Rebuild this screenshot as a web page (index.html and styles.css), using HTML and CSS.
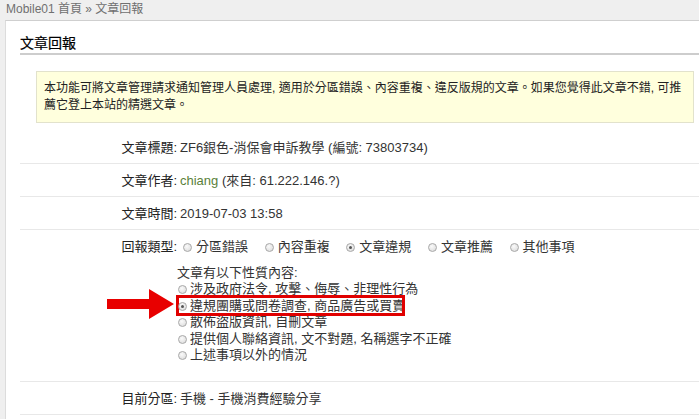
FILE: index.html
```html
<!DOCTYPE html>
<html lang="zh-Hant">
<head>
    <meta charset="UTF-8">
    <title>文章回報 - Mobile01</title>
    <link rel="stylesheet" href="styles.css">
</head>
<body>

  <div class="crumb">Mobile01 首頁 &raquo; 文章回報</div>

  <div class="panel">
    <h2 class="panel-title">文章回報</h2>

    <div class="notice">本功能可將文章管理請求通知管理人員處理, 適用於分區錯誤、內容重複、違反版規的文章。如果您覺得此文章不錯, 可推薦它登上本站的精選文章。</div>

    <!-- report details -->
    <div class="row">
      <div class="label">文章標題:</div>
      <div class="value">ZF6銀色-消保會申訴教學 (編號: 73803734)</div>
    </div>
    <div class="row">
      <div class="label">文章作者:</div>
      <div class="value"><span class="author">chiang</span> (來自: 61.222.146.?)</div>
    </div>
    <div class="row">
      <div class="label">文章時間:</div>
      <div class="value">2019-07-03 13:58</div>
    </div>
    <div class="row row-type">
      <div class="label">回報類型:</div>
      <div class="value">
        <span class="opt"><i class="radio"></i>分區錯誤</span>
        <span class="opt"><i class="radio"></i>內容重複</span>
        <span class="opt"><i class="radio on"></i>文章違規</span>
        <span class="opt"><i class="radio"></i>文章推薦</span>
        <span class="opt"><i class="radio"></i>其他事項</span>
      </div>
      <div class="sub">
        <div class="sub-title">文章有以下性質內容:</div>
        <div class="sub-opt"><i class="radio"></i>涉及政府法令, 攻擊、侮辱、非理性行為</div>
        <div class="sub-opt picked">
          <svg class="arrow" width="68" height="30" viewBox="0 0 68 30"><polygon points="0,10 42,10 42,0 67,15 42,30 42,20 0,20" fill="#e80000"/></svg>
          <span class="mark"></span>
          <i class="radio on"></i>違規團購或問卷調查, 商品廣告或買賣
        </div>
        <div class="sub-opt"><i class="radio"></i>散佈盜版資訊, 自刪文章</div>
        <div class="sub-opt"><i class="radio"></i>提供個人聯絡資訊, 文不對題, 名稱選字不正確</div>
        <div class="sub-opt"><i class="radio"></i>上述事項以外的情況</div>
      </div>
    </div>
    <div class="row">
      <div class="label">目前分區:</div>
      <div class="value">手機 - 手機消費經驗分享</div>
    </div>
  </div>

</body>
</html>
```

FILE: styles.css
```css
html, body {
  margin: 0;
  padding: 0;
}

body {
  background-color: #efefef;
  color: #333;
  font-family: "Liberation Sans", "Noto Sans CJK TC", sans-serif;
  font-size: 13px;
}

.crumb {
  color: #707070;
  font-size: 12px;
  height: 20px;
  line-height: 18px;
  padding: 0 6px;
}

.panel {
  margin-left: 5px;
  background-color: #fff;
  border-top: 1px solid #cfcfcf;
  border-left: 1px solid #dcdcdc;
  padding: 0 0 0 14px;
  min-height: 400px;
}

.panel-title {
  margin: 0;
  padding: 13px 0 1px;
  line-height: 18px;
  font-size: 14px;
  font-weight: normal;
  color: #000;
  -webkit-text-stroke: 0.2px #000;
  border-bottom: 2px solid #cdcdcd;
}

.notice {
  margin: 16px 5px 8px 16px;
  padding: 8px 2px 8px 7px;
  background-color: #ffffdd;
  border: 1px solid #e2e2cc;
  font-size: 12px;
  line-height: 17px;
  color: #222;
}

.row {
  display: grid;
  grid-template-columns: 157px 1fr;
  padding: 8px 0 7px;
  line-height: 17px;
  border-bottom: 1px solid #e8e8e8;
}

.label {
  text-align: right;
  color: #222;
}

.value {
  padding-left: 3px;
  color: #333;
}

.author {
  color: #5a7f3a;
}

.row-type {
  padding-bottom: 17px;
}

.opt {
  display: inline-block;
  margin-right: 10px;
}

.radio {
  display: inline-block;
  box-sizing: border-box;
  width: 9px;
  height: 9px;
  margin: 0 4px 0 3px;
  border: 1px solid #a8a8a8;
  border-radius: 50%;
  background: radial-gradient(circle at 40% 35%, #fafafa, #d8d8d8);
  vertical-align: -1px;
  position: relative;
}

.radio.on::after {
  content: "";
  position: absolute;
  left: 2px;
  top: 2px;
  width: 3px;
  height: 3px;
  border-radius: 50%;
  background: #555;
}

.sub {
  grid-column: 2;
  margin-top: 9px;
}

.sub-title {
  line-height: 17px;
}

.sub-opt {
  line-height: 16.5px;
}

.sub-opt .radio {
  margin: 0 3px 0 1px;
}

.picked {
  position: relative;
}

.mark {
  position: absolute;
  left: -1px;
  top: -3px;
  width: 223px;
  height: 15px;
  border: 3px solid #e00000;
}

.arrow {
  position: absolute;
  left: -70px;
  top: -9px;
}
```
